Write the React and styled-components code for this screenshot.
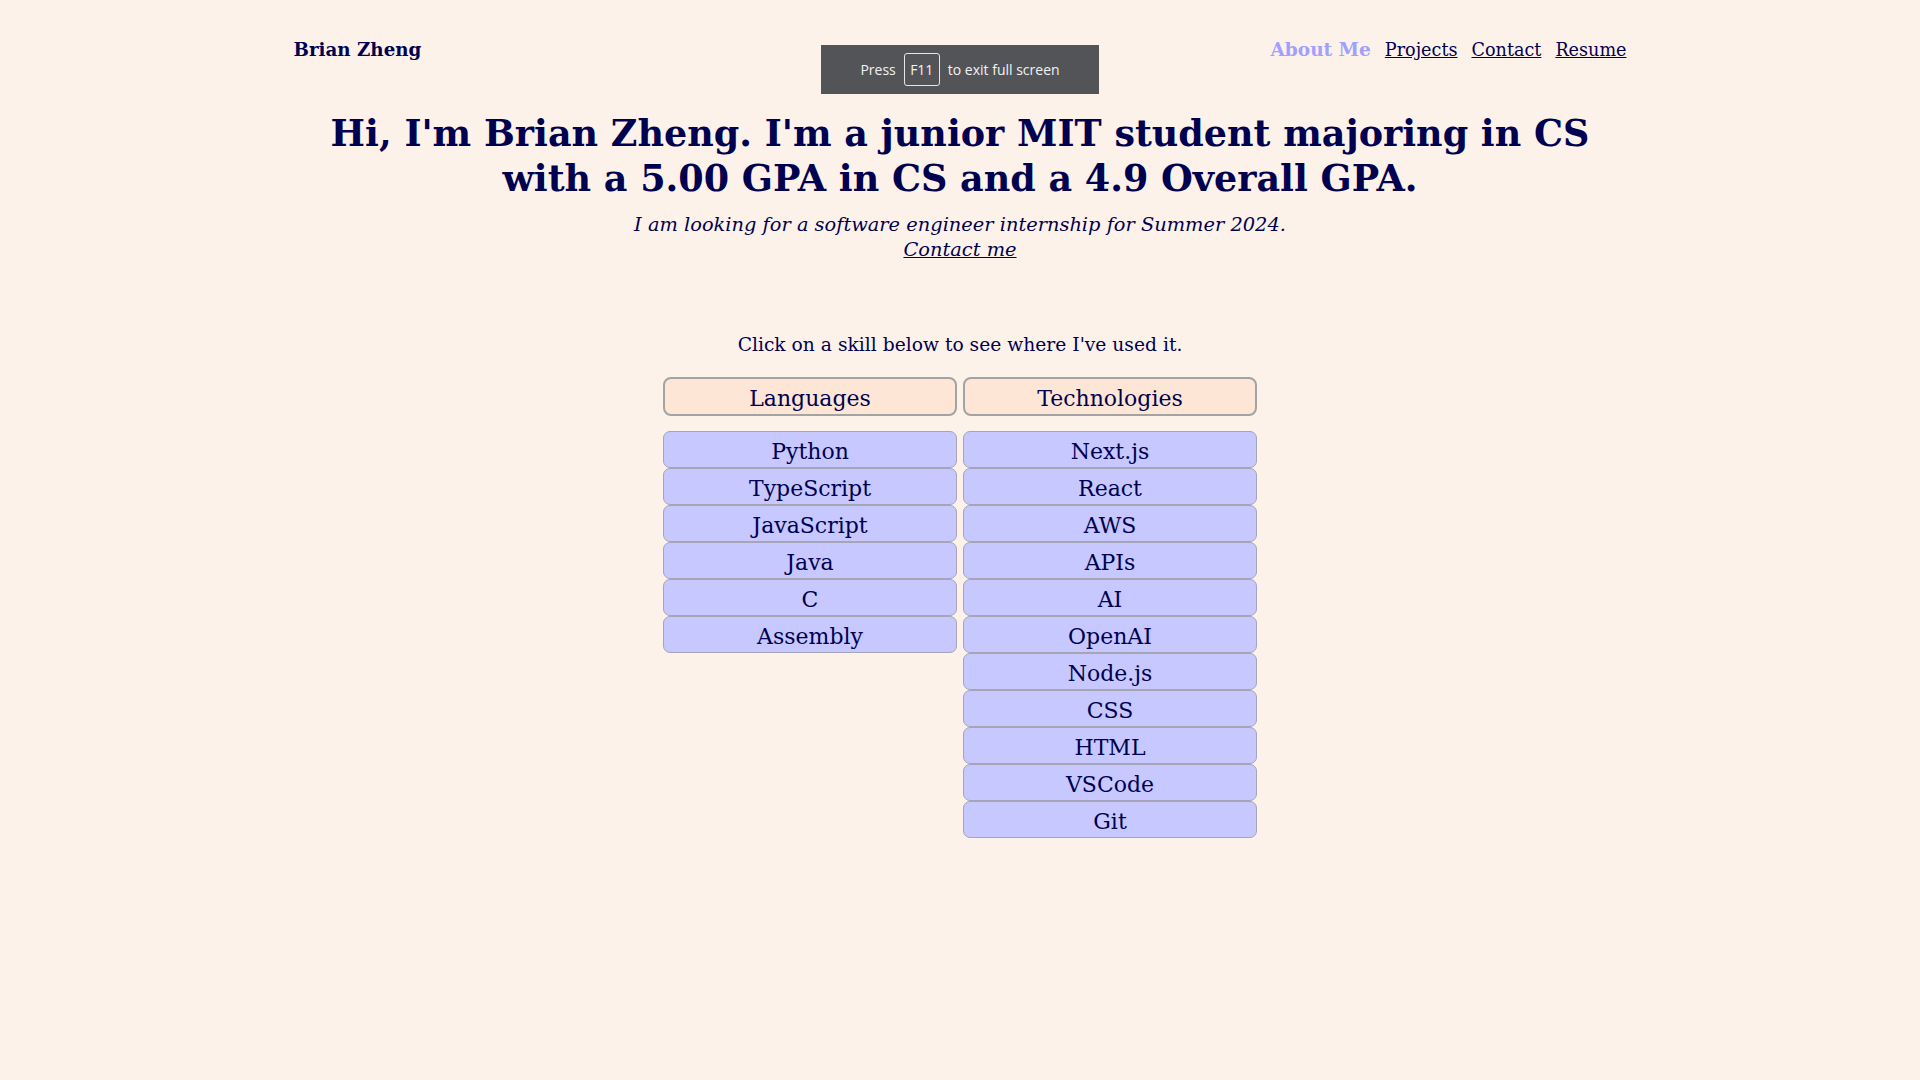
import React from "react";
import styled, { createGlobalStyle } from "styled-components";

const GlobalStyle = createGlobalStyle`
  html, body {
    margin: 0;
    padding: 0;
    background: #fdf2ea;
  }
  body {
    font-family: "DejaVu Serif", "Liberation Serif", serif;
    color: #000050;
  }
`;

const Page = styled.div`
  min-height: 1080px;
  background: #fdf2ea;
`;

const Container = styled.div`
  width: 1333px;
  margin: 0 auto;
  padding-top: 38px;
  display: flex;
  flex-direction: column;
  align-items: stretch;
`;

const NavBar = styled.header`
  display: flex;
  justify-content: space-between;
  align-items: baseline;
  line-height: 24px;
`;

const Brand = styled.a`
  font-size: 18.3px;
  font-weight: bold;
  color: #000050;
  text-decoration: none;
`;

const NavLinks = styled.nav`
  display: flex;
  align-items: baseline;
  gap: 14px;
`;

const NavLink = styled.a`
  font-size: ${(p) => (p.$active ? "18.5px" : "17.6px")};
  color: ${(p) => (p.$active ? "#a0a0ff" : "#000050")};
  font-weight: ${(p) => (p.$active ? "bold" : "normal")};
  text-decoration: ${(p) => (p.$active ? "none" : "underline")};
  cursor: pointer;
`;

const Heading = styled.h1`
  margin: 49px 0 0;
  text-align: center;
  font-size: 36.5px;
  line-height: 45px;
  font-weight: bold;
`;

const Sub = styled.p`
  margin: 11px 0 0;
  text-align: center;
  font-size: 19.4px;
  line-height: 25px;
  font-style: italic;
`;

const SubLink = styled.a`
  color: #000050;
  text-decoration: underline;
`;

const Prompt = styled.p`
  margin: 70px 0 0;
  text-align: center;
  font-size: 18.7px;
  line-height: 25px;
`;

const Skills = styled.div`
  margin: 20px auto 0;
  display: grid;
  grid-template-columns: 300px 300px;
  align-items: start;
`;

const Column = styled.div`
  display: flex;
  flex-direction: column;
  padding: 0 3px;
`;

const CategoryButton = styled.button`
  height: 39px;
  margin-bottom: 15px;
  background: #fee6d6;
  border: 2px solid #a3a3a3;
  border-radius: 8px;
  font-family: inherit;
  font-size: 22px;
  color: #000050;
  padding: 4px 0 0;
  cursor: pointer;
`;

const SkillButton = styled.button`
  height: 37px;
  background: #c6c8ff;
  border: 1.5px solid #a5a5b5;
  border-radius: 7px;
  font-family: inherit;
  font-size: 22px;
  color: #000050;
  padding: 3px 0 0;
  cursor: pointer;
`;

const Toast = styled.div`
  position: fixed;
  top: 45px;
  left: 821px;
  width: 278px;
  height: 49px;
  background: #535458;
  display: flex;
  align-items: center;
  justify-content: center;
  gap: 8px;
  font-family: "Open Sans", "Noto Sans", sans-serif;
  font-size: 14px;
  color: #f2f2f2;
`;

const Key = styled.span`
  display: inline-flex;
  align-items: center;
  justify-content: center;
  width: 34px;
  height: 31px;
  border: 1px solid #e6e6e6;
  border-radius: 3px;
`;

const languages = ["Python", "TypeScript", "JavaScript", "Java", "C", "Assembly"];
const technologies = [
  "Next.js",
  "React",
  "AWS",
  "APIs",
  "AI",
  "OpenAI",
  "Node.js",
  "CSS",
  "HTML",
  "VSCode",
  "Git",
];

export default function App() {
  return (
    <Page>
      <GlobalStyle />
      <Container>
        <NavBar>
          <Brand>Brian Zheng</Brand>
          <NavLinks>
            <NavLink $active>About Me</NavLink>
            <NavLink>Projects</NavLink>
            <NavLink>Contact</NavLink>
            <NavLink>Resume</NavLink>
          </NavLinks>
        </NavBar>
        <Heading>
          Hi, I'm Brian Zheng. I'm a junior MIT student majoring in CS
          <br />
          with a 5.00 GPA in CS and a 4.9 Overall GPA.
        </Heading>
        <Sub>
          I am looking for a software engineer internship for Summer 2024.
          <br />
          <SubLink>Contact me</SubLink>
        </Sub>
        <Prompt>Click on a skill below to see where I've used it.</Prompt>
        <Skills>
          <Column>
            <CategoryButton>Languages</CategoryButton>
            {languages.map((s) => (
              <SkillButton key={s}>{s}</SkillButton>
            ))}
          </Column>
          <Column>
            <CategoryButton>Technologies</CategoryButton>
            {technologies.map((s) => (
              <SkillButton key={s}>{s}</SkillButton>
            ))}
          </Column>
        </Skills>
      </Container>
      <Toast>
        <span>Press</span>
        <Key>F11</Key>
        <span>to exit full screen</span>
      </Toast>
    </Page>
  );
}
